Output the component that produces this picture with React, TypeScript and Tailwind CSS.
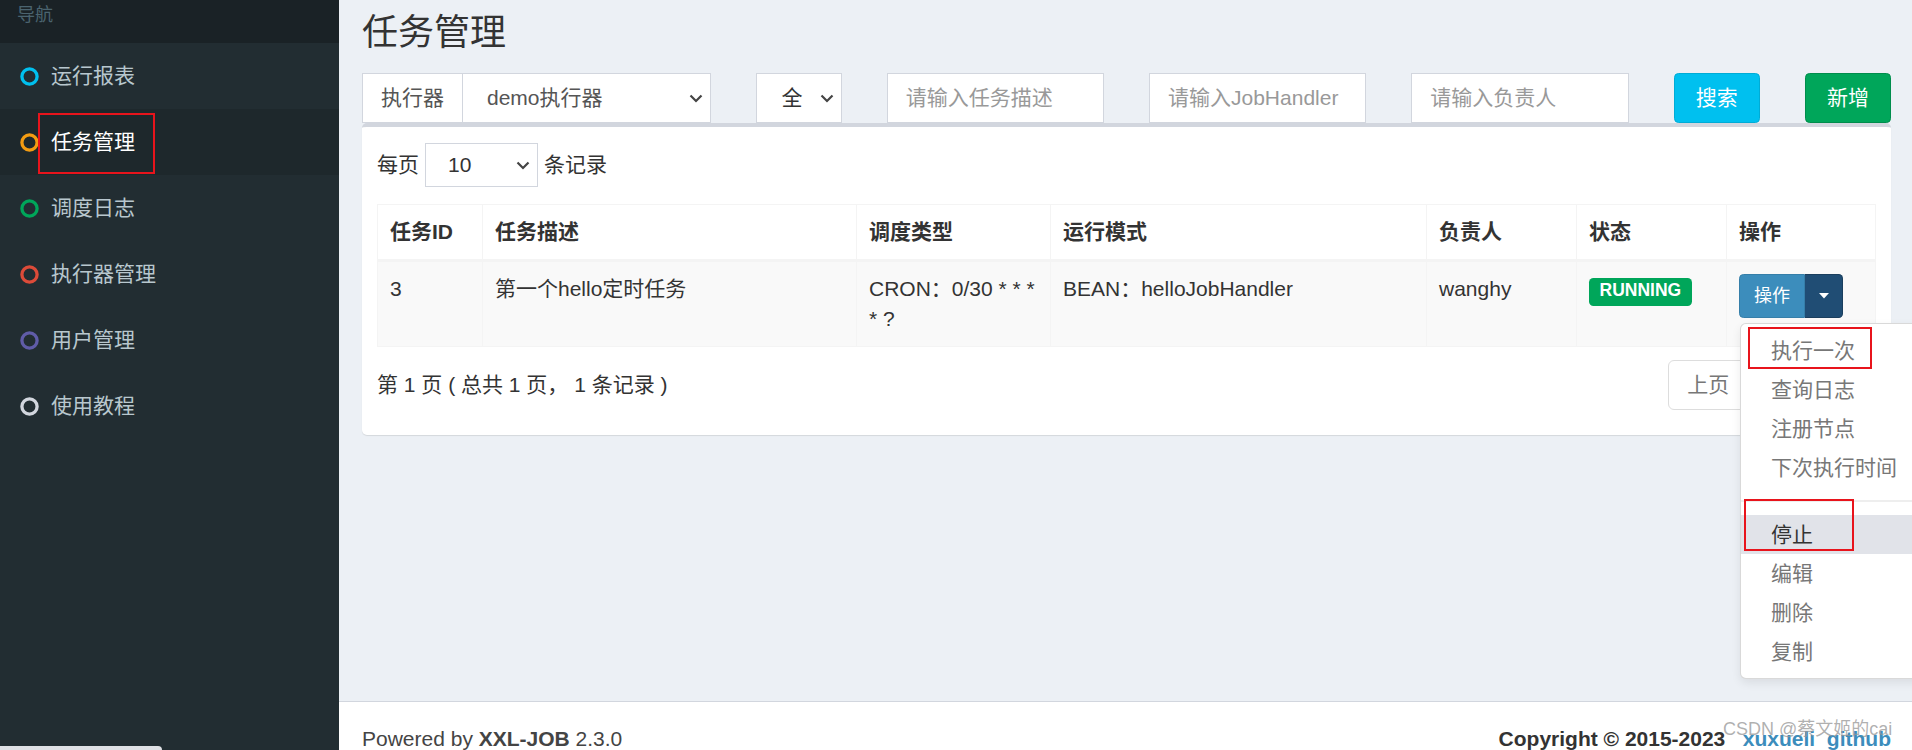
import React from "react";

const menu = [
  { label: "运行报表", color: "#00c0ef" },
  { label: "任务管理", color: "#f39c12", active: true },
  { label: "调度日志", color: "#00a65a" },
  { label: "执行器管理", color: "#dd4b39" },
  { label: "用户管理", color: "#605ca8" },
  { label: "使用教程", color: "#d2d6de" },
];

const actions = ["执行一次", "查询日志", "注册节点", "下次执行时间"];
const actions2 = ["停止", "编辑", "删除", "复制"];

function Ring({ color }: { color: string }) {
  return (
    <svg width="19" height="19" viewBox="0 0 19 19" className="shrink-0">
      <circle cx="9.5" cy="9.5" r="7.6" fill="none" stroke={color} strokeWidth="3.3" />
    </svg>
  );
}

function Chevron() {
  return (
    <svg width="14" height="9" viewBox="0 0 14 9" fill="none" stroke="#444" strokeWidth="2.2" className="shrink-0">
      <polyline points="1.5,1.5 7,7 12.5,1.5" />
    </svg>
  );
}

function Sidebar() {
  return (
    <aside className="w-[339px] shrink-0 bg-[#222d32]">
      <div className="h-[43px] bg-[#1a2226] pl-[17px] text-[18px] leading-[30px] text-[#4b646f]">导航</div>
      {menu.map((m) => (
        <div
          key={m.label}
          className={
            "flex h-[66px] items-center gap-[12px] pl-[20px] text-[21px] " +
            (m.active ? "bg-[#1e282c] text-white" : "text-[#b8c7ce]")
          }
        >
          <Ring color={m.color} />
          <span>{m.label}</span>
        </div>
      ))}
    </aside>
  );
}

function Filters() {
  return (
    <div className="grid h-[50px] grid-cols-12 gap-x-[45px] text-[21px]">
      <div className="col-span-3 flex h-full">
        <div className="flex items-center border border-[#d2d6de] bg-white px-[18px] text-[#555]">执行器</div>
        <div className="flex flex-1 items-center justify-between border border-l-0 border-[#d2d6de] bg-white pl-[24px] pr-[7px] text-[#555]">
          <span>demo执行器</span>
          <Chevron />
        </div>
      </div>
      <div className="col-span-1 flex items-center justify-between overflow-hidden border border-[#d2d6de] bg-white pl-[25px] pr-[7px] text-[#333]">
        <span>全</span>
        <Chevron />
      </div>
      <div className="col-span-2 flex items-center border border-[#d2d6de] bg-white pl-[18px] text-[#999]">请输入任务描述</div>
      <div className="col-span-2 flex items-center border border-[#d2d6de] bg-white pl-[18px] text-[#999]">请输入JobHandler</div>
      <div className="col-span-2 flex items-center border border-[#d2d6de] bg-white pl-[18px] text-[#999]">请输入负责人</div>
      <button className="col-span-1 flex items-center justify-center rounded-[4.5px] border border-[#00acd6] bg-[#00c0ef] text-white">搜索</button>
      <button className="col-span-1 flex items-center justify-center rounded-[4.5px] border border-[#008d4c] bg-[#00a65a] text-white">新增</button>
    </div>
  );
}

function OpMenu() {
  return (
    <div className="absolute left-[1px] top-full z-10 mt-[5px] w-[240px] rounded-[6px] border border-[rgba(0,0,0,0.15)] bg-white py-[7px] text-left text-[21px] font-normal shadow-[0_4px_10px_rgba(0,0,0,0.08)]">
      {actions.map((a) => (
        <div key={a} className="px-[30px] py-[4.5px] leading-[30px] text-[#777] whitespace-nowrap">{a}</div>
      ))}
      <div className="my-[13px] h-[2px] bg-[#eeeeee]" />
      {actions2.map((a, i) => (
        <div
          key={a}
          className={"px-[30px] py-[4.5px] leading-[30px] whitespace-nowrap " + (i === 0 ? "bg-[#e1e3e9] text-[#333]" : "text-[#777]")}
        >
          {a}
        </div>
      ))}
    </div>
  );
}

function JobTable() {
  const th = "border border-[#f4f4f4] border-b-[3px] px-[12px] py-[12px] text-left font-bold align-top";
  const td = "border border-[#f4f4f4] px-[12px] py-[12px] align-top";
  return (
    <table className="mt-[17px] w-full table-fixed border-collapse text-[21px] leading-[30px] text-[#333]">
      <colgroup>
        <col className="w-[105px]" />
        <col className="w-[374px]" />
        <col className="w-[194px]" />
        <col className="w-[376px]" />
        <col className="w-[150px]" />
        <col className="w-[150px]" />
        <col />
      </colgroup>
      <thead>
        <tr className="bg-white">
          <th className={th}>任务ID</th>
          <th className={th}>任务描述</th>
          <th className={th}>调度类型</th>
          <th className={th}>运行模式</th>
          <th className={th}>负责人</th>
          <th className={th}>状态</th>
          <th className={th}>操作</th>
        </tr>
      </thead>
      <tbody>
        <tr className="bg-[#f9f9f9]">
          <td className={td}>3</td>
          <td className={td}>第一个hello定时任务</td>
          <td className={td}>
            CRON：0/30 * * *
            <br />* ?
          </td>
          <td className={td}>BEAN：helloJobHandler</td>
          <td className={td}>wanghy</td>
          <td className={td}>
            <span className="mt-[4px] inline-block rounded-[4.5px] bg-[#00a65a] px-[10.5px] pb-[6px] pt-[4px] align-top text-[17.5px] font-bold leading-none text-white">
              RUNNING
            </span>
          </td>
          <td className={td}>
            <div className="relative inline-flex align-top">
              <div className="flex h-[44px] items-center rounded-l-[4.5px] border border-[#367fa9] bg-[#3c8dbc] px-[14px] text-[18px] text-white">操作</div>
              <div className="flex h-[44px] w-[38px] items-center justify-center rounded-r-[4.5px] border border-l-0 border-[#1b3f5e] bg-[#204d74]">
                <svg width="10" height="6" viewBox="0 0 10 6">
                  <polygon points="0,0 10,0 5,5.5" fill="#fff" />
                </svg>
              </div>
              <OpMenu />
            </div>
          </td>
        </tr>
      </tbody>
    </table>
  );
}

function Pager() {
  return (
    <div className="flex h-[50px] text-[21px] leading-[30px]">
      <div className="flex items-center rounded-l-[6px] border border-[#dddddd] bg-white px-[18px] text-[#777]">上页</div>
      <div className="-ml-px flex items-center border border-[#3c8dbc] bg-[#3c8dbc] px-[18px] text-white">1</div>
      <div className="-ml-px flex items-center rounded-r-[6px] border border-[#dddddd] bg-white px-[18px] text-[#777]">下页</div>
    </div>
  );
}

export default function App() {
  return (
    <div className="relative flex h-[750px] w-[1912px] overflow-hidden font-['Liberation_Sans','Noto_Sans_CJK_SC',sans-serif]">
      <Sidebar />
      <div className="flex min-w-0 flex-1 flex-col bg-[#ecf0f5]">
        <div className="h-[701px] shrink-0 pl-[23px] pr-[21px]">
          <h1 className="h-[73px] pt-[13px] text-[36px] leading-[40px] text-[#333]">任务管理</h1>
          <Filters />
          <div className="rounded-[5px] border-t-[4px] border-[#d2d6de] bg-white px-[15px] pb-[25px] pt-[16px] shadow-[0_1px_1px_rgba(0,0,0,0.1)]">
            <div className="flex h-[44px] items-center text-[21px] text-[#333]">
              <span>每页</span>
              <div className="ml-[6px] flex h-[44px] w-[113px] items-center justify-between border border-[#d2d6de] pl-[22px] pr-[7px]">
                <span>10</span>
                <Chevron />
              </div>
              <span className="ml-[6px]">条记录</span>
            </div>
            <JobTable />
            <div className="mt-[13px] flex items-center justify-between">
              <div className="text-[21px] leading-[30px] text-[#333]">第 1 页 ( 总共 1 页， 1 条记录 )</div>
              <Pager />
            </div>
          </div>
        </div>
        <footer className="flex flex-1 justify-between border-t border-[#d2d6de] bg-white pl-[23px] pr-[21px] pt-[22px] text-[21px] leading-[30px] text-[#444]">
          <div>
            Powered by <b>XXL-JOB</b> 2.3.0
          </div>
          <div className="font-bold text-[#333]">
            Copyright © 2015-2023&nbsp;&nbsp;&nbsp;<span className="text-[#3c8dbc]">xuxueli</span>&nbsp;&nbsp;<span className="text-[#3c8dbc]">github</span>
          </div>
        </footer>
      </div>

      {/* annotation boxes */}
      <div className="pointer-events-none absolute left-[38px] top-[113px] h-[61px] w-[117px] border-2 border-[#e8141c]" />
      <div className="pointer-events-none absolute left-[1748px] top-[327px] z-20 h-[42px] w-[124px] border-2 border-[#e8141c]" />
      <div className="pointer-events-none absolute left-[1744px] top-[499px] z-20 h-[52px] w-[110px] border-2 border-[#e8141c]" />

      <div className="pointer-events-none absolute left-[1723px] top-[717px] z-20 text-[18px] leading-[24px] text-[rgba(150,150,150,0.75)]">
        CSDN @蔡文姬的cai
      </div>
      <div className="absolute bottom-0 left-0 h-[4px] w-[162px] rounded-tr-[6px] bg-[#dfe1e5]" />
    </div>
  );
}
